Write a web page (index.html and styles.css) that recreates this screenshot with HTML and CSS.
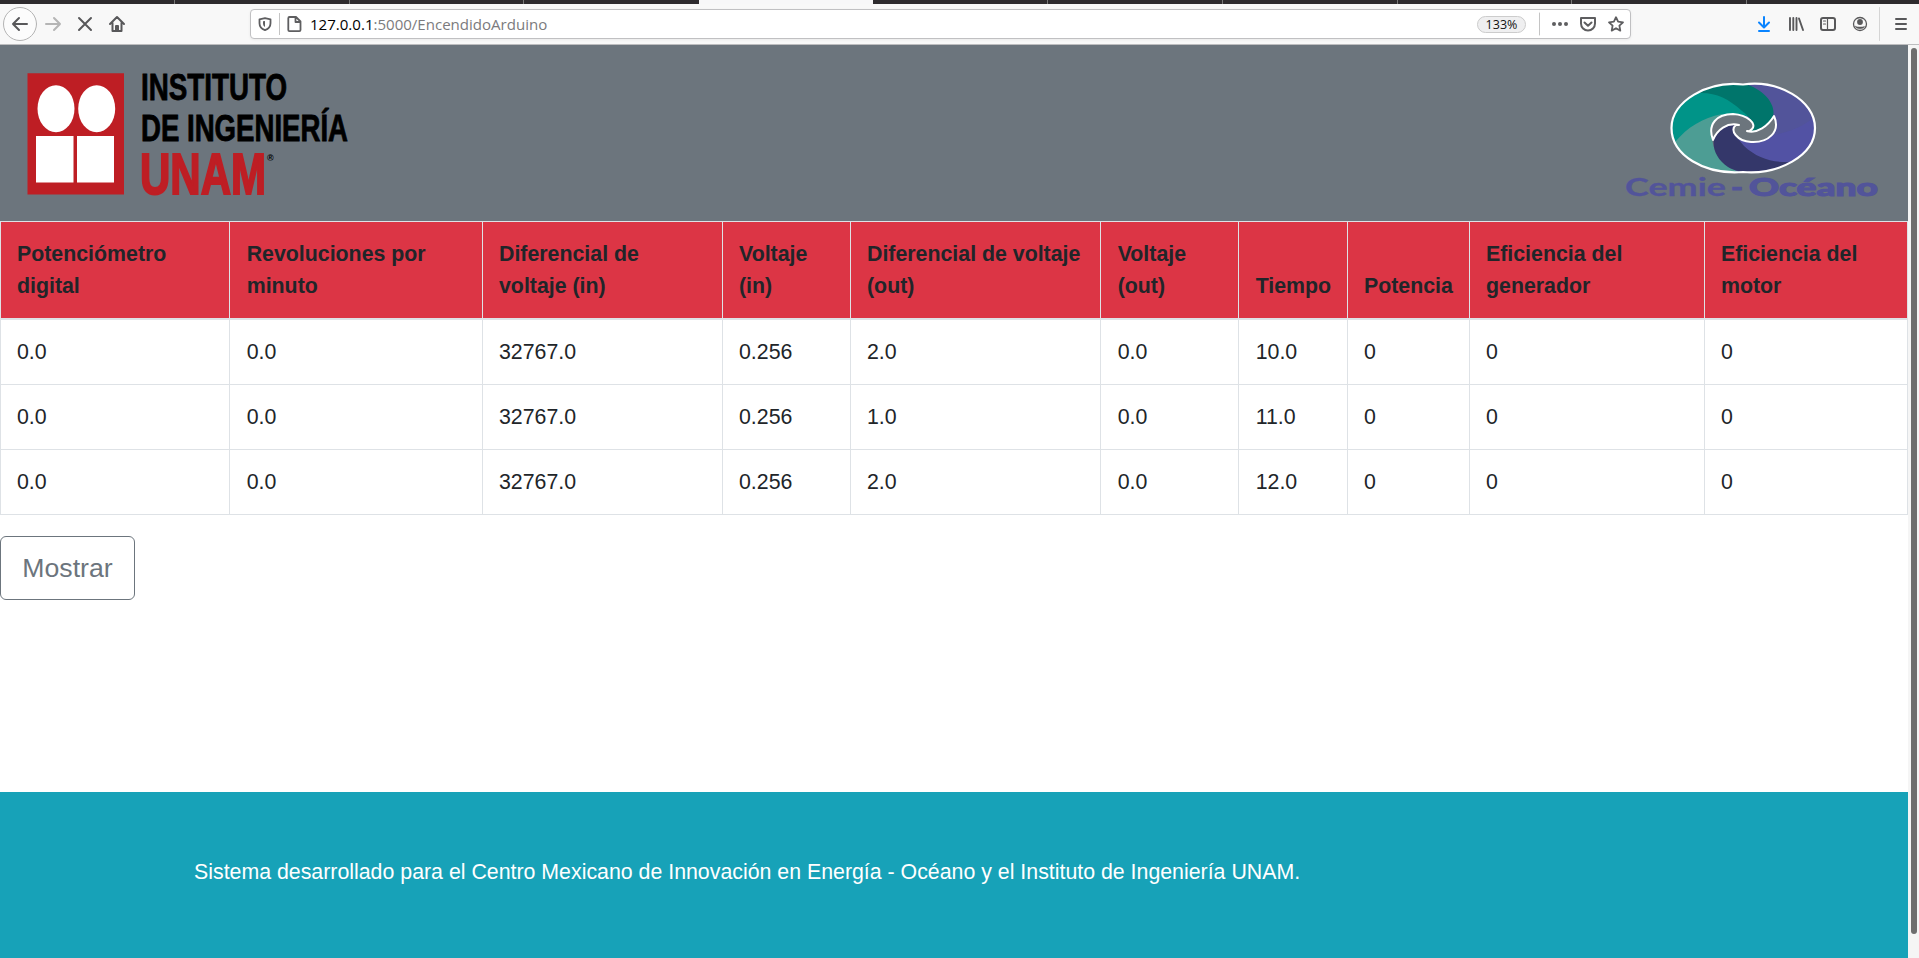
FILE: index.html
```html
<!DOCTYPE html>
<html lang="es">
<head>
<meta charset="utf-8">
<title>Encendido Arduino</title>
<link rel="stylesheet" href="styles.css">
</head>
<body>
<div class="tabs"><i></i><i></i><i></i><i class="last"></i><i class="active"></i><i></i><i></i><i></i><i></i><i></i><i></i></div>
<div class="toolbar">
  <svg class="nav" width="140" height="40" viewBox="0 4 140 40" fill="none" stroke="#58585a" stroke-width="2" stroke-linecap="round" stroke-linejoin="round">
    <circle cx="20" cy="24" r="16.500" fill="#fcfcfc" stroke="#b4b4b4" stroke-width="1"/>
    <path d="M27 24H13M19 18l-6 6 6 6"/>
    <path d="M46 24h14M54 18l6 6-6 6" stroke="#b5b5b5"/>
    <path d="M79 18l12 12M91 18l-12 12"/>
    <path d="M110 24l7-7 7 7M112.500 23v8h9v-8M116 31v-5h2v5"/>
  </svg>
  <div class="urlbar">
    <svg width="62" height="28" viewBox="251 10 62 28" fill="none" stroke="#5e5e60" stroke-width="1.800" stroke-linejoin="round">
      <path d="M265 18.200l5.500 1.100v4c0 3.500-2.500 5.800-5.500 6.900c-3-1.100-5.500-3.400-5.500-6.900v-4z"/>
      <path d="M265 21v6c-1.500-1-2-2-2-4v-1.700z" fill="#5e5e60" stroke="none"/>
      <path d="M279.500 13v22" stroke="#c4c4c4" stroke-width="1"/>
      <path d="M289.500 17h6.500l4.500 4.500v8.500q0 1.200-1.200 1.200h-9.800q-1.200 0-1.200-1.200v-11.800q0-1.200 1.200-1.200zM295.500 17v5h5"/>
    </svg>
    <span class="url"><b>127.0.0.1</b>:5000/EncendidoArduino</span>
    <span class="zoom">133%</span>
    <svg width="92" height="28" viewBox="1538 10 92 28" fill="none" stroke="#5e5e60" stroke-width="2" stroke-linejoin="round" stroke-linecap="round">
      <path d="M1539.500 13v22" stroke="#c4c4c4" stroke-width="1"/>
      <g fill="#5e5e60" stroke="none"><circle cx="1554" cy="24" r="2"/><circle cx="1560" cy="24" r="2"/><circle cx="1566" cy="24" r="2"/></g>
      <path d="M1581 18h14v5.500a7 7 0 0 1-14 0zM1584.500 22.500l3.500 3.300 3.500-3.300"/>
      <path d="M1616 17.200l2.100 4.500 4.900.6-3.600 3.400.9 4.900-4.300-2.400-4.300 2.400.9-4.900-3.600-3.400 4.900-.6z" stroke-width="1.800"/>
    </svg>
  </div>
  <svg class="tools" width="179" height="40" viewBox="1740 4 179 40" fill="none" stroke="#58585a" stroke-width="2" stroke-linecap="round" stroke-linejoin="round">
    <path d="M1764 17v10M1759 22.500l5 5 5-5M1759 31h10" stroke="#0a84ff"/>
    <path d="M1790 18v12M1793.300 18v12M1796.500 18v12M1799 18.500l4 11.500" stroke-width="1.900"/>
    <rect x="1821" y="18" width="14" height="12" rx="2"/>
    <path d="M1827.500 18v12M1823.500 21h2M1823.500 24h2" stroke-width="1.200"/>
    <circle cx="1860" cy="24" r="6.500" stroke-width="1.300"/>
    <circle cx="1860" cy="22" r="2.900" fill="#58585a" stroke="none"/>
    <path d="M1855.500 26.500c2 .8 7 .8 9 0c-1 3-8 3-9 0z" fill="#58585a" stroke-width=".5"/>
    <path d="M1879.500 7.500v33" stroke="#d5d5d5" stroke-width="1"/>
    <path d="M1896 19h10M1896 24h10M1896 29h10"/>
  </svg>
</div>
<div class="viewport">
  <main class="page">
    <header class="banner">
      <svg width="340" height="176" viewBox="0 45 340 176" font-family="'Liberation Sans Narrow','Liberation Sans',Arial,sans-serif" font-weight="bold">
        <path fill="#be1e24" d="M27.500 73.300H124v121.200H27.500z"/>
        <g fill="#fff"><ellipse cx="56" cy="108.700" rx="18.500" ry="23.500"/><ellipse cx="96.700" cy="108.700" rx="18.500" ry="23.500"/><path d="M36 136h37.500v46.500H36zM77 136h37v46.500H77z"/></g>
        <text x="141" y="99.600" font-size="36.500" stroke="#000" stroke-width=".8" textLength="146" lengthAdjust="spacingAndGlyphs">INSTITUTO</text>
        <text x="141" y="140.800" font-size="36.500" stroke="#000" stroke-width=".8" textLength="207" lengthAdjust="spacingAndGlyphs">DE INGENIERÍA</text>
        <text x="140" y="193.800" font-size="57" fill="#be1e24" stroke="#be1e24" stroke-width="2" textLength="126" lengthAdjust="spacingAndGlyphs">UNAM</text>
        <text x="267" y="160.500" font-size="9">®</text>
      </svg>
      <svg width="300" height="176" viewBox="1608 45 300 176">
        <defs><clipPath id="oval"><path d="M1743 84.500C1778 79.500 1815 100 1815 128C1815 156 1778 175 1743 172C1704 175 1671.500 155 1671.500 128C1671.500 101 1708 80.500 1743 84.500z"/></clipPath></defs>
        <g clip-path="url(#oval)">
          <path fill="#52549a" d="M1735 80h85v95h-85z"/>
          <path fill="#5252a4" d="M1820 112C1800 132 1770 142 1733 130C1745 155 1770 166 1790 161L1820 175z"/>
          <path fill="#009488" d="M1665 78h50l40 38-42 2-40 28z"/>
          <path fill="#00756b" d="M1698 93C1712 80 1735 78 1748 85C1766 91 1776 106 1773 116C1768 128 1758 132 1748 131C1756 124 1750 117 1742 111C1728 98 1715 92 1698 93z"/>
          <path fill="#4d9d94" d="M1675 142C1688 127 1702 118 1722 114L1712 138C1714 158 1728 168 1746 175H1670z"/>
          <path fill="#34376a" d="M1714 139C1717 128 1728 122 1738 125C1730 130 1739 140 1744 146C1757 158 1772 163 1791 162C1770 175 1740 175 1728 167C1717 160 1712 148 1714 139z"/>
        </g>
        <path fill="#6c757d" stroke="#fff" stroke-width="2" stroke-linejoin="round" d="M1713 140C1707 124 1717 114 1733 114C1748 115 1757 124 1752 129Q1749 132 1747 131C1757 134 1768 126 1774 116C1781 132 1768 143 1751 142C1737 141 1729 130 1736 125L1739 125C1727 122 1717 130 1713 140z"/>
        <path fill="none" stroke="#fff" stroke-width="2.200" d="M1743 84.500C1778 79.500 1815 100 1815 128C1815 156 1778 175 1743 172C1704 175 1671.500 155 1671.500 128C1671.500 101 1708 80.500 1743 84.500z"/>
        <g font-family="Lato,sans-serif" font-size="25.500" fill="#52549a" stroke="#52549a" stroke-width="1.100">
          <text x="1625" y="195.500" textLength="101" lengthAdjust="spacingAndGlyphs" font-weight="bold" stroke-width=".3">Cemie</text>
          <text x="1731" y="195.500" font-weight="bold" textLength="12" lengthAdjust="spacingAndGlyphs">-</text>
          <text x="1749" y="195.500" font-weight="900" textLength="129" lengthAdjust="spacingAndGlyphs">Océano</text>
        </g>
      </svg>
    </header>
    <table class="data">
      <colgroup><col class="c1"><col class="c2"><col class="c3"><col class="c4"><col class="c5"><col class="c6"><col class="c7"><col class="c8"><col class="c9"><col class="c10"></colgroup>
      <thead><tr><th>Potenciómetro digital</th><th>Revoluciones por minuto</th><th>Diferencial de voltaje (in)</th><th>Voltaje (in)</th><th>Diferencial de voltaje (out)</th><th>Voltaje (out)</th><th>Tiempo</th><th>Potencia</th><th>Eficiencia del generador</th><th>Eficiencia del motor</th></tr></thead>
      <tbody>
        <tr><td>0.0</td><td>0.0</td><td>32767.0</td><td>0.256</td><td>2.0</td><td>0.0</td><td>10.0</td><td>0</td><td>0</td><td>0</td></tr>
        <tr><td>0.0</td><td>0.0</td><td>32767.0</td><td>0.256</td><td>1.0</td><td>0.0</td><td>11.0</td><td>0</td><td>0</td><td>0</td></tr>
        <tr><td>0.0</td><td>0.0</td><td>32767.0</td><td>0.256</td><td>2.0</td><td>0.0</td><td>12.0</td><td>0</td><td>0</td><td>0</td></tr>
      </tbody>
    </table>
    <button class="btn">Mostrar</button>
    <footer class="footer">Sistema desarrollado para el Centro Mexicano de Innovación en Energía - Océano y el Instituto de Ingeniería UNAM.</footer>
  </main>
  <div class="scrollbar"><div class="thumb"></div></div>
</div>
</body>
</html>
```
FILE: styles.css
```css
* { box-sizing: border-box; }
body {
  margin: 0;
  height: 958px;
  overflow: hidden;
  display: flex;
  flex-direction: column;
  background: #fff;
  color: #212529;
  font: 21.333px/32px "Liberation Sans", Arial, sans-serif;
}
svg { display: block; flex: none; }
.tabs { display: flex; height: 4px; background: #2e2b2e; flex: none; }
.tabs i { flex: none; width: 174.8px; border-right: 1px solid #777; }
.tabs .last { border-right: 0; }
.tabs .active { width: 174px; background: #f7f7f8; border-right: 0; }
.toolbar {
  display: flex;
  flex: none;
  align-items: center;
  height: 41px;
  background: #f8f8f8;
  border-bottom: 1px solid #bdbdbf;
}
.urlbar {
  display: flex;
  align-items: center;
  width: 1381px;
  height: 30px;
  margin-left: 110px;
  background: #fff;
  border: 1px solid #c0c0c2;
  border-radius: 4px;
  box-shadow: 0 1px 3px rgba(0, 0, 0, .06);
}
.url {
  flex: 1;
  margin-left: -3px;
  font: 15.050px/20px "Open Sans", "Noto Sans", sans-serif;
  color: #7b7b7d;
}
.url b { font-weight: 400; color: #000; }
.zoom {
  width: 49px;
  height: 17px;
  margin-right: 12px;
  border: 1px solid #ccc;
  border-radius: 9px;
  background: #efeff0;
  font: 12.500px/15px "Open Sans", "Noto Sans", sans-serif;
  text-align: center;
  color: #111;
}
.tools { margin-left: auto; }
.viewport { display: flex; flex: 1; min-height: 0; }
.page { width: 1908px; display: flex; flex-direction: column; }
.banner { display: flex; justify-content: space-between; height: 176px; flex: none; background: #6c757d; }
.banner svg { overflow: visible; }
.data {
  flex: none;
  width: 1908px;
  table-layout: fixed;
  border-collapse: separate;
  border-spacing: 0;
  border: 1px solid #dee2e6;
  border-width: 1px 0 0 1px;
}
.c1 { width: 229px; }
.c2 { width: 253px; }
.c3 { width: 240px; }
.c4 { width: 128px; }
.c5 { width: 250px; }
.c6 { width: 138px; }
.c7 { width: 109px; }
.c8 { width: 122px; }
.c9 { width: 235px; }
.c10 { width: 203px; }
.data th, .data td {
  padding: 16px;
  text-align: left;
  border: 1px solid #dee2e6;
  border-width: 0 1px 1px 0;
}
.data tr > :nth-child(2), .data tr > :nth-child(6), .data tr > :nth-child(7) { padding-left: 16.700px; padding-right: 15px; }
.data th { background: #dc3545; vertical-align: bottom; border-bottom-width: 2px; }
.btn {
  align-self: flex-start;
  width: 135px;
  height: 64px;
  margin-top: 21px;
  padding: 0;
  border: 1px solid #6c757d;
  border-radius: 6px;
  background: transparent;
  color: #6c757d;
  font: 26.667px/40px "Liberation Sans", Arial, sans-serif;
}
.footer { margin-top: auto; height: 166px; padding: 64px 194px; background: #17a2b8; color: #fff; }
.scrollbar { width: 11px; padding: 3px 2px 0 3px; background: #f5f5f5; }
.thumb { width: 6px; height: 886px; border-radius: 3px; background: #6e6e6e; }
```
